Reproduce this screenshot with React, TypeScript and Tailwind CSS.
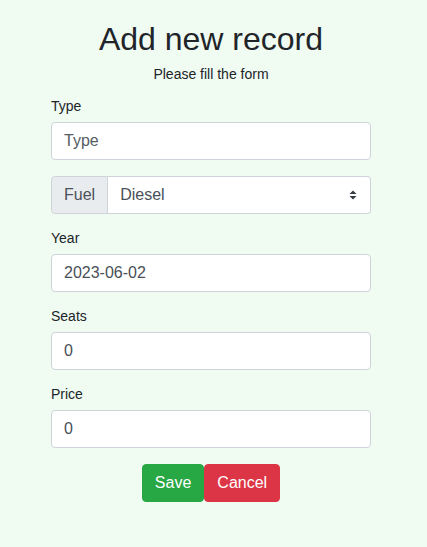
import React from "react";

const font = { fontFamily: '"Liberation Sans", Arial, sans-serif' };

function Field({ label, value }: { label: string; value: string }) {
  return (
    <div className="mb-[13.5px]">
      <div className="text-[14px] leading-[21px] text-[#212529] mb-[5.5px]">{label}</div>
      <div className="h-[38px] w-full rounded-[4px] border border-[#ced4da] bg-white px-[12px] flex items-center text-[16px]">
        <span className="text-[#495057]">{value}</span>
      </div>
    </div>
  );
}

export default function App() {
  return (
    <div className="min-h-[547px] w-full bg-[#f0fbf2]" style={font}>
      <div className="w-[422px]">
        <div className="mx-auto w-[320px] pt-[20px]">
          <h2 className="text-center text-[32px] leading-[38px] text-[#212529]">Add new record</h2>
          <p className="mt-[5.5px] text-center text-[14px] leading-[21px] text-[#212529]">Please fill the form</p>
          <div className="mt-[11px]">
            <div className="text-[14px] leading-[21px] text-[#212529] mb-[5.5px]">Type</div>
            <div className="h-[38px] w-full rounded-[4px] border border-[#ced4da] bg-white px-[12px] flex items-center text-[16px] text-[#555d64]">
              Type
            </div>
            <div className="mt-[16px] mb-[13.5px] flex h-[38px] w-full">
              <div className="flex items-center rounded-l-[4px] border border-[#ced4da] bg-[#e9ecef] px-[12px] text-[16px] text-[#495057]">
                Fuel
              </div>
              <div className="flex flex-1 items-center justify-between rounded-r-[4px] border border-l-0 border-[#ced4da] bg-white pl-[12px] pr-[13px] text-[16px] text-[#495057]">
                <span>Diesel</span>
                <svg width="8" height="10" viewBox="0 0 8 10">
                  <path d="M4 0.5 L7.5 4 L0.5 4 Z" fill="#343a40" />
                  <path d="M4 9.5 L7.5 6 L0.5 6 Z" fill="#343a40" />
                </svg>
              </div>
            </div>
            <Field label="Year" value="2023-06-02" />
            <Field label="Seats" value="0" />
            <Field label="Price" value="0" />
          </div>
          <div className="mt-[16px] flex justify-center">
            <button className="h-[38px] rounded-[4px] border border-[#28a745] bg-[#28a745] px-[12px] text-[16px] text-white">
              Save
            </button>
            <button className="h-[38px] rounded-[4px] border border-[#dc3545] bg-[#dc3545] px-[12px] text-[16px] text-white">
              Cancel
            </button>
          </div>
        </div>
      </div>
    </div>
  );
}
